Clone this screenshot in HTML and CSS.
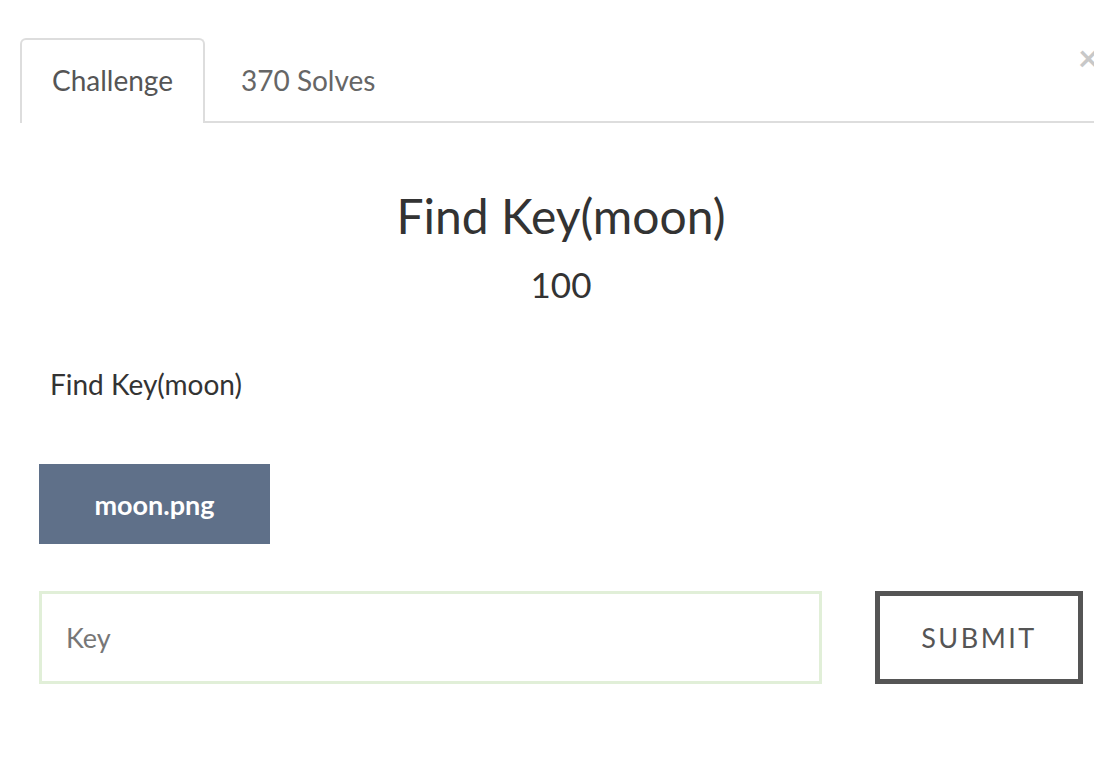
FILE: index.html
```html
<!DOCTYPE html>
<html>
<head>
<meta charset="utf-8">
<link rel="stylesheet" href="styles.css">
</head>
<body>
<div class="modal">
  <button class="close" aria-label="Close">&times;</button>
  <ul class="tabs">
    <li class="tab active">Challenge</li>
    <li class="tab solves">370 Solves</li>
  </ul>
  <div class="body">
    <h2 class="title">Find Key(moon)</h2>
    <h3 class="value">100</h3>
    <p class="desc">Find Key(moon)</p>
    <div class="files">
      <a class="file-btn">moon.png</a>
    </div>
    <form class="submit-row">
      <input class="key-input" type="text" placeholder="Key">
      <button class="submit-btn" type="button">SUBMIT</button>
    </form>
  </div>
</div>
</body>
</html>
```

FILE: styles.css
```css
html, body {
  margin: 0;
  padding: 0;
  background: #fff;
  overflow: hidden;
}
body {
  font-family: Lato, "Open Sans", sans-serif;
  color: #333;
}
.modal {
  position: relative;
  width: 1082px;
  padding: 38px 0 0 20px;
}
.close {
  position: absolute;
  top: 39px;
  left: 1078px;
  background: none;
  border: 0;
  padding: 0;
  font-family: Lato, sans-serif;
  font-size: 36px;
  font-weight: 700;
  line-height: 36px;
  color: #c8c8c8;
}
.tabs {
  list-style: none;
  margin: 0;
  padding: 0;
  display: flex;
  border-bottom: 2px solid #ddd;
}
.tab {
  height: 81px;
  line-height: 81px;
  padding: 0 30px;
  font-size: 28px;
  color: #666;
  border: 2px solid transparent;
  border-bottom: 0;
  margin-bottom: -2px;
  box-sizing: content-box;
}
.tab.solves {
  padding-left: 34px;
}
.tab.active {
  color: #555;
  background: #fff;
  border-color: #ddd;
  border-radius: 6px 6px 0 0;
  height: 81px;
  padding-bottom: 2px;
}
.body {
  width: 1044px;
  margin-left: 19px;
}
.title {
  margin: 63px 0 0;
  text-align: center;
  font-size: 48px;
  font-weight: 400;
  line-height: 60px;
}
.value {
  margin: 10px 0 0;
  text-align: center;
  font-size: 35px;
  font-weight: 400;
  line-height: 56px;
}
.desc {
  margin: 52px 0 0 11px;
  font-size: 28px;
  line-height: 40px;
}
.files {
  margin-top: 60px;
}
.file-btn {
  display: inline-flex;
  align-items: center;
  justify-content: center;
  width: 231px;
  height: 80px;
  background: #5f7089;
  color: #fff;
  font-size: 27px;
  font-weight: 700;
}
.submit-row {
  margin: 47px 0 0;
  display: flex;
  justify-content: space-between;
}
.key-input {
  width: 783px;
  height: 93px;
  box-sizing: border-box;
  border: 3px solid #e1efd8;
  padding: 0 24px;
  font-family: Lato, sans-serif;
  font-size: 27px;
  color: #333;
  outline: none;
}
.key-input::placeholder {
  color: #777;
}
.submit-btn {
  width: 208px;
  height: 93px;
  box-sizing: border-box;
  border: 5px solid #555;
  background: #fff;
  color: #555;
  font-family: Lato, sans-serif;
  font-size: 27px;
  letter-spacing: 2.5px;
}
```
